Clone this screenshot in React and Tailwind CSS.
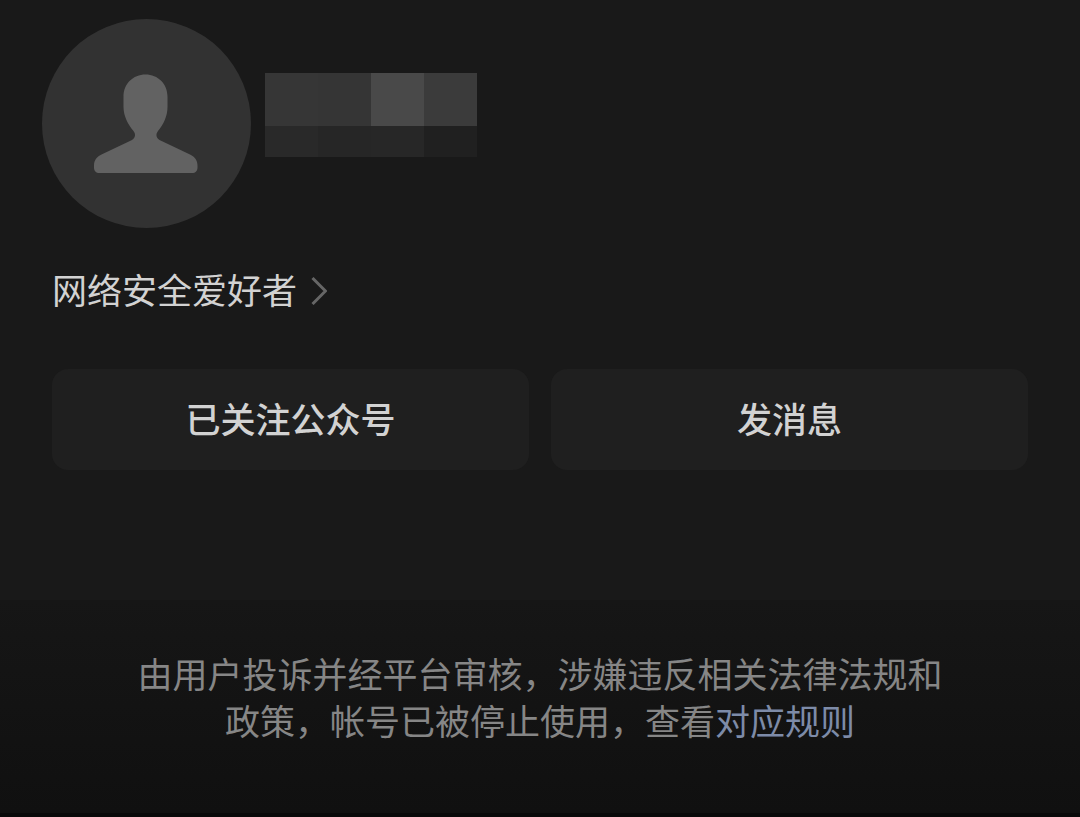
const mosaicTop = ["bg-[#363636]", "bg-[#353535]", "bg-[#494949]", "bg-[#3b3b3b]"];
const mosaicBottom = ["bg-[#292929]", "bg-[#262626]", "bg-[#272727]", "bg-[#202020]"];

function Avatar() {
  return (
    <svg className="size-[209px] shrink-0" viewBox="0 0 209 209" role="img" aria-label="头像">
      <circle cx="104.5" cy="104.5" r="104.5" fill="#323232" />
      <path
        fill="#626262"
        d="M103.500 55.500c12.500 0 22 9.500 22 22v10.500c0 9-4 17.500-9.500 24-2.300 3-2.200 6.500 1.500 9L148 135.500c5 2.500 7.500 6 7.500 11v2c0 3.500-2 5.500-5.500 5.500H57.500c-3.500 0-5.500-2-5.500-5.500v-2c0-5 2.500-8.500 7.500-11L90 121c3.700-2.500 3.800-6 1.500-9-5.500-6.500-10-15-10-24v-10.500c0-12.500 9.500-22 22-22z"
      />
    </svg>
  );
}

function HiddenName() {
  return (
    <div className="mt-[54px] grid h-[84px] w-[212px] grid-cols-4 grid-rows-[53px_31px]" aria-hidden="true">
      {[...mosaicTop, ...mosaicBottom].map((color, i) => (
        <div key={i} className={color} />
      ))}
    </div>
  );
}

function ActionButton({ children }) {
  return (
    <button
      type="button"
      className="flex-1 rounded-2xl bg-[#1f1f1f] pt-[23px] pb-[26px] text-[35px] leading-[52px] font-medium text-[#d2d2d2]"
    >
      {children}
    </button>
  );
}

export default function App() {
  return (
    <div
      lang="zh-CN"
      className="flex min-h-screen flex-col border-b-4 border-[#090909] bg-[#191919] font-['Noto_Sans_CJK_SC',sans-serif]"
    >
      <main className="flex flex-col px-[52px] pt-[19px] pb-[130px]">
        <header className="-ml-[10px] flex items-start gap-[14px]">
          <Avatar />
          <HiddenName />
        </header>

        <a
          href="#profile"
          className="mt-[35px] flex items-center gap-[14px] self-start text-[35px] leading-[52px] text-[#d2d2d2]"
        >
          网络安全爱好者
          <svg className="h-8 w-4" viewBox="0 0 16 32" fill="none" aria-hidden="true">
            <path d="M1.500 5 14.500 18 1.500 31" stroke="#666666" strokeWidth="3" />
          </svg>
        </a>

        <div className="mt-[54px] flex gap-[22px]">
          <ActionButton>已关注公众号</ActionButton>
          <ActionButton>发消息</ActionButton>
        </div>
      </main>

      <footer className="flex flex-1 justify-center bg-linear-to-b from-[#161616] to-[#101010] px-12 pt-[49px] pb-12">
        <p className="max-w-[820px] text-center text-[35px] leading-[47px] text-[#868686]">
          由用户投诉并经平台审核，涉嫌违反相关法律法规和政策，帐号已被停止使用，查看
          <a href="#rules" className="inline-block text-[#7d8ba8]">
            对应规则
          </a>
        </p>
      </footer>
    </div>
  );
}
